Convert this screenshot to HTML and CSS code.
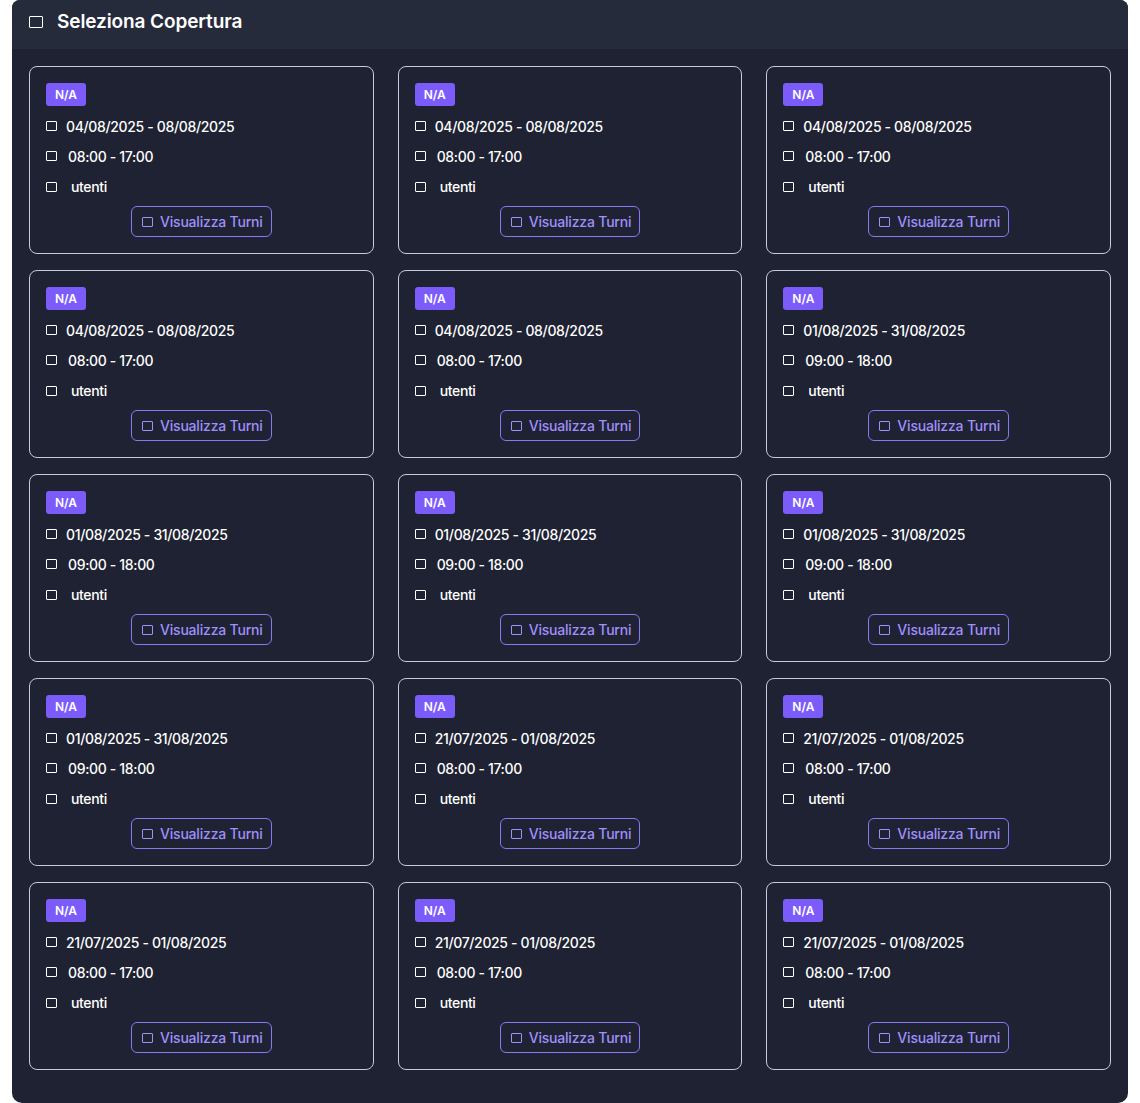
FILE: index.html
```html
<!DOCTYPE html>
<html lang="it">
<head>
<meta charset="utf-8">
<title>Seleziona Copertura</title>
<link rel="stylesheet" href="styles.css">
</head>
<body>
<section class="panel">
  <header class="panel-head"><span class="ico ico-head"></span><h2>Seleziona Copertura</h2></header>
  <div class="grid" id="grid"></div>
</section>
<script src="app.js"></script>
</body>
</html>
```
FILE: styles.css
```css
* { box-sizing: border-box; }
html, body { margin: 0; padding: 0; background: #ffffff; }
body {
  font-family: Inter, "Noto Sans", sans-serif;
  color: #ffffff;
  padding: 0 12px;
}
.panel {
  background: #1e2232;
  border-radius: 8px 8px 10px 10px;
  height: 1103px;
  overflow: hidden;
}
.panel-head {
  height: 49px;
  background: #262b3b;
  display: flex;
  align-items: center;
  padding: 0 0 6px 17px;
  gap: 14px;
}
.panel-head h2 {
  margin: 0;
  font-size: 19px;
  font-weight: 600;
  letter-spacing: -0.1px;
}
.ico {
  display: inline-block;
  border: 1.6px solid #ffffff;
  border-radius: 1px;
  flex: none;
}
.ico-head { width: 14px; height: 12px; }
.grid {
  display: grid;
  grid-template-columns: repeat(3, 1fr);
  column-gap: 24px;
  row-gap: 16px;
  padding: 17px 17px 0 17px;
}
.card {
  border: 1px solid #c9cbd3;
  border-radius: 8px;
  height: 188px;
  padding: 16px 16px 0 16px;
  display: flex;
  flex-direction: column;
}
.badge {
  align-self: flex-start;
  background: #7b5cfa;
  color: #fff;
  font-size: 12px;
  font-weight: 600;
  height: 23px;
  line-height: 23px;
  padding: 0 9px;
  border-radius: 3px;
  margin-bottom: 5px;
}
.row {
  display: flex;
  align-items: center;
  height: 30px;
  font-size: 14px;
  font-weight: 500;
  letter-spacing: -0.35px;
}
.row .ico { width: 11px; height: 10px; border-width: 1.5px; margin-right: 9px; }
.row.t .ico { margin-right: 11px; }
.row.u .ico { margin-right: 14px; }
.row.u { height: 31px; }
.btn-wrap { display: flex; justify-content: center; margin-top: 4px; }
.btn {
  display: flex;
  align-items: center;
  gap: 7px;
  height: 31px;
  padding: 0 8px 0 10px;
  border: 1px solid #8a77f3;
  border-radius: 6px;
  color: #a08ffb;
  background: transparent;
  font-family: inherit;
  font-size: 14px;
  font-weight: 500;
  letter-spacing: -0.2px;
}
.btn .ico { width: 11px; height: 10px; border-color: #a08ffb; border-width: 1.5px; }
```
FILE: app.js
```js
const data = [
  ["04/08/2025 - 08/08/2025","08:00 - 17:00"],
  ["04/08/2025 - 08/08/2025","08:00 - 17:00"],
  ["04/08/2025 - 08/08/2025","08:00 - 17:00"],
  ["04/08/2025 - 08/08/2025","08:00 - 17:00"],
  ["04/08/2025 - 08/08/2025","08:00 - 17:00"],
  ["01/08/2025 - 31/08/2025","09:00 - 18:00"],
  ["01/08/2025 - 31/08/2025","09:00 - 18:00"],
  ["01/08/2025 - 31/08/2025","09:00 - 18:00"],
  ["01/08/2025 - 31/08/2025","09:00 - 18:00"],
  ["01/08/2025 - 31/08/2025","09:00 - 18:00"],
  ["21/07/2025 - 01/08/2025","08:00 - 17:00"],
  ["21/07/2025 - 01/08/2025","08:00 - 17:00"],
  ["21/07/2025 - 01/08/2025","08:00 - 17:00"],
  ["21/07/2025 - 01/08/2025","08:00 - 17:00"],
  ["21/07/2025 - 01/08/2025","08:00 - 17:00"]
];
const grid = document.getElementById('grid');
grid.innerHTML = data.map(([d, t]) => `
  <div class="card">
    <span class="badge">N/A</span>
    <div class="row d"><span class="ico"></span>${d}</div>
    <div class="row t"><span class="ico"></span>${t}</div>
    <div class="row u"><span class="ico"></span>utenti</div>
    <div class="btn-wrap"><button class="btn"><span class="ico"></span>Visualizza Turni</button></div>
  </div>`).join('');
```
